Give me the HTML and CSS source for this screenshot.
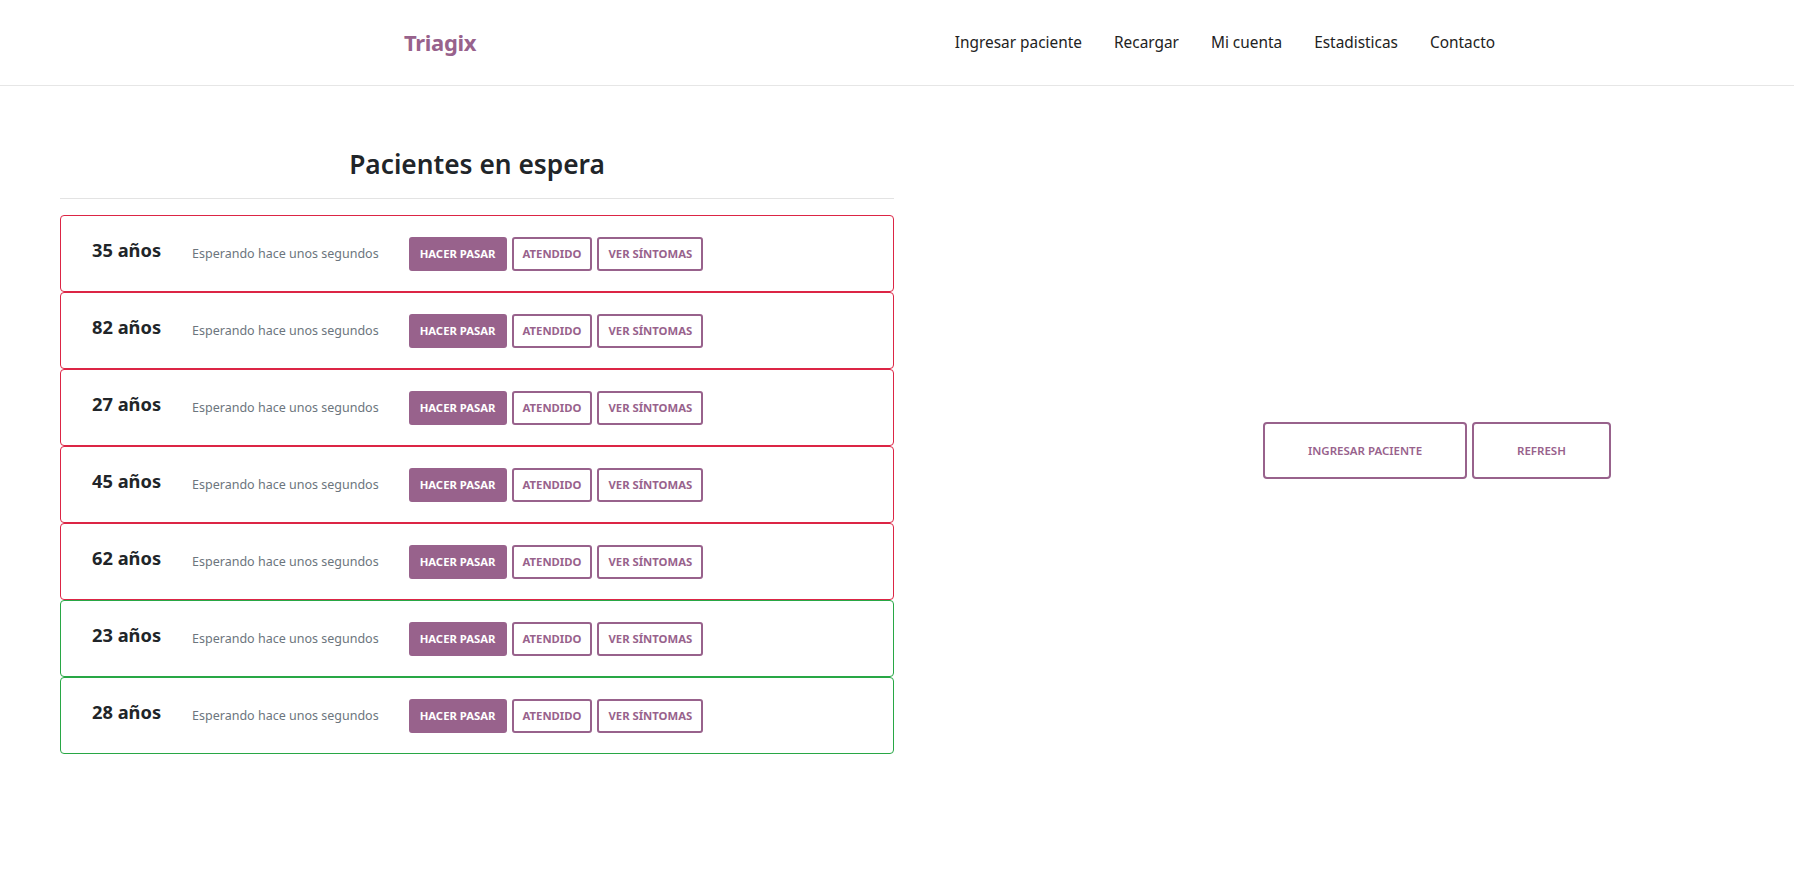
FILE: index.html
```html
<!DOCTYPE html>
<html lang="es">
<head>
<meta charset="utf-8">
<title>Triagix</title>
<link rel="stylesheet" href="styles.css">
</head>
<body>
<header class="topbar">
  <a class="brand" href="#">Triagix</a>
  <nav class="nav">
    <a href="#">Ingresar paciente</a>
    <a href="#">Recargar</a>
    <a href="#">Mi cuenta</a>
    <a href="#">Estadisticas</a>
    <a href="#">Contacto</a>
  </nav>
</header>
<main class="main">
  <section class="queue">
    <h2 class="queue-title">Pacientes en espera</h2>
    <hr class="divider">
    <div class="card urgent">
      <h5 class="age">35 años</h5>
      <span class="wait">Esperando hace unos segundos</span>
      <div class="actions"><button class="btn fill">HACER PASAR</button><button class="btn">ATENDIDO</button><button class="btn">VER SÍNTOMAS</button></div>
    </div>
    <div class="card urgent">
      <h5 class="age">82 años</h5>
      <span class="wait">Esperando hace unos segundos</span>
      <div class="actions"><button class="btn fill">HACER PASAR</button><button class="btn">ATENDIDO</button><button class="btn">VER SÍNTOMAS</button></div>
    </div>
    <div class="card urgent">
      <h5 class="age">27 años</h5>
      <span class="wait">Esperando hace unos segundos</span>
      <div class="actions"><button class="btn fill">HACER PASAR</button><button class="btn">ATENDIDO</button><button class="btn">VER SÍNTOMAS</button></div>
    </div>
    <div class="card urgent">
      <h5 class="age">45 años</h5>
      <span class="wait">Esperando hace unos segundos</span>
      <div class="actions"><button class="btn fill">HACER PASAR</button><button class="btn">ATENDIDO</button><button class="btn">VER SÍNTOMAS</button></div>
    </div>
    <div class="card urgent">
      <h5 class="age">62 años</h5>
      <span class="wait">Esperando hace unos segundos</span>
      <div class="actions"><button class="btn fill">HACER PASAR</button><button class="btn">ATENDIDO</button><button class="btn">VER SÍNTOMAS</button></div>
    </div>
    <div class="card calm">
      <h5 class="age">23 años</h5>
      <span class="wait">Esperando hace unos segundos</span>
      <div class="actions"><button class="btn fill">HACER PASAR</button><button class="btn">ATENDIDO</button><button class="btn">VER SÍNTOMAS</button></div>
    </div>
    <div class="card calm">
      <h5 class="age">28 años</h5>
      <span class="wait">Esperando hace unos segundos</span>
      <div class="actions"><button class="btn fill">HACER PASAR</button><button class="btn">ATENDIDO</button><button class="btn">VER SÍNTOMAS</button></div>
    </div>
  </section>
  <aside class="side">
    <button class="btn big">INGRESAR PACIENTE</button>
    <button class="btn big">REFRESH</button>
  </aside>
</main>
</body>
</html>
```

FILE: styles.css
```css
* { box-sizing: border-box; }
body {
  margin: 0;
  font-family: "Noto Sans", "Open Sans", sans-serif;
  color: #212529;
  background: #fff;
}
.topbar {
  height: 86px;
  border-bottom: 1px solid #e6e6e6;
  display: flex;
  align-items: center;
  justify-content: space-between;
  padding: 0 299px 0 404px;
}
.brand {
  font-size: 22px;
  font-weight: 700;
  color: #98628c;
  text-decoration: none;
  letter-spacing: -0.3px;
  margin-top: -2px;
}
.nav {
  display: flex;
  gap: 32px;
}
.nav a {
  color: #222;
  text-decoration: none;
  font-size: 15.4px;
}
.main {
  display: flex;
  align-items: flex-start;
  padding: 61px 0 0 60px;
}
.queue {
  width: 834px;
  flex: none;
}
.queue-title {
  margin: 0;
  text-align: center;
  font-size: 26.3px;
  font-weight: 600;
  line-height: 34px;
  color: #212529;
}
.divider {
  border: 0;
  border-top: 1px solid #e3e3e3;
  margin: 17px 0 16px;
}
.card {
  height: 77px;
  border: 1px solid;
  border-radius: 4px;
  display: flex;
  align-items: center;
  padding: 0 31px;
}
.card.urgent { border-color: #dc2545; }
.card.calm { border-color: #28a745; }
.age {
  margin: 0 31px 8px 0;
  font-size: 18.3px;
  font-weight: 700;
  line-height: 24px;
}
.wait {
  font-size: 12.5px;
  color: #6c757d;
  margin-right: 30px;
}
.actions {
  display: flex;
  gap: 5px;
}
.btn {
  font-family: inherit;
  height: 34px;
  padding: 0 9px;
  font-size: 11.3px;
  font-weight: 700;
  color: #98628c;
  background: #fff;
  border: 2px solid #98628c;
  border-radius: 3px;
  cursor: pointer;
}
.btn.fill {
  background: #98628c;
  color: #fff;
}
.side {
  flex: 1;
  display: flex;
  gap: 5px;
  padding-left: 369px;
  margin-top: 275px;
}
.btn.big {
  height: 57px;
  padding: 0 43px;
  font-size: 11.5px;
  font-weight: 600;
  border-radius: 4px;
}
```
